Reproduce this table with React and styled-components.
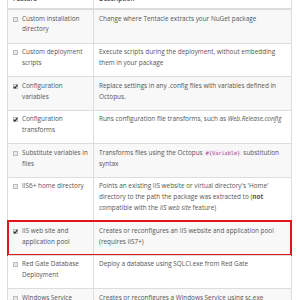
import * as React from 'react';
import styled, { createGlobalStyle } from 'styled-components';

const Global = createGlobalStyle`
  body {
    margin: 0;
    background: #fff;
    font-family: "Open Sans", "Liberation Sans", sans-serif;
  }
`;

const Page = styled.div`
  padding: 0 8px 0 7px;
  margin-top: -9.4px;
`;

const Table = styled.div`
  border-left: 1px solid #ddd;
  border-right: 1px solid #ddd;
  color: #555;
  font-size: 6.4px;
  line-height: 10.8px;
`;

const Row = styled.div`
  display: grid;
  grid-template-columns: 85px 1fr;
  border-top: 1px solid #ddd;
  background: ${props => (props.striped ? '#f8f8f8' : '#fff')};
  outline: ${props => (props.marked ? '2px solid #e3141c' : 'none')};
  outline-offset: -1px;
  position: relative;
`;

const HeadRow = styled(Row)`
  border-top: none;
  border-bottom: 1px solid #ddd;
  font-weight: 600;
  color: #444;
`;

const Cell = styled.div`
  padding: ${props => (props.head ? '3.6px 5px 3px' : '3.6px 5px 7.4px')};
  & + & {
    border-left: 1px solid #ddd;
  }
`;

const FeatureCell = styled(Cell)`
  display: flex;
  gap: 4px;
  align-items: flex-start;
`;

const Box = styled.span`
  flex: none;
  width: 3px;
  height: 3px;
  margin-top: 3px;
  border: 1px solid #bcbcbc;
  background: #e9e9e9;
  display: flex;
  align-items: center;
  justify-content: center;
  svg {
    display: block;
  }
`;

const Code = styled.code`
  font-family: "DejaVu Sans Mono", monospace;
  font-size: 5.2px;
  line-height: 1;
  color: #a9468e;
  background: #f6eef6;
  padding: 0 1.5px;
  border-radius: 2px;
`;

const Check = ({ on }) => (
  <Box>
    {on && (
      <svg width="5" height="5" viewBox="0 0 10 10" style={{ margin: '-1px' }}>
        <path d="M1.5 5.5 L4 8 L8.8 1.8" fill="none" stroke="#333" strokeWidth="2.4" />
      </svg>
    )}
  </Box>
);

const rows = [
  { f: 'Custom installation directory', d: 'Change where Tentacle extracts your NuGet package' },
  { f: 'Custom deployment scripts', d: 'Execute scripts during the deployment, without embedding them in your package' },
  { f: 'Configuration variables', on: true, d: 'Replace settings in any .config files with variables defined in Octopus.' },
  { f: 'Configuration transforms', on: true, d: <>Runs configuration file transforms, such as <em>Web.Release.config</em></> },
  { f: 'Substitute variables in files', d: <>Transforms files using the Octopus <Code>#{'{'}Variable{'}'}</Code> substitution syntax</> },
  {
    f: 'IIS6+ home directory',
    d: <>Points an existing IIS website or virtual directory's 'Home' directory to the path the package was extracted to (<strong>not</strong> compatible with the <em>IIS web site</em> feature)</>,
  },
  { f: 'IIS web site and application pool', on: true, marked: true, d: 'Creates or reconfigures an IIS website and application pool (requires IIS7+)' },
  { f: 'Red Gate Database Deployment', d: 'Deploy a database using SQLCI.exe from Red Gate' },
  { f: 'Windows Service', d: 'Creates or reconfigures a Windows Service using sc.exe' },
];

export default function App() {
  return (
    <Page>
      <Global />
      <Table>
        <HeadRow>
          <Cell head>Feature</Cell>
          <Cell head>Description</Cell>
        </HeadRow>
        {rows.map((r, i) => (
          <Row key={i} striped={i % 2 === 0} marked={r.marked}>
            <FeatureCell>
              <Check on={r.on} />
              <span>{r.f}</span>
            </FeatureCell>
            <Cell>{r.d}</Cell>
          </Row>
        ))}
      </Table>
    </Page>
  );
}
